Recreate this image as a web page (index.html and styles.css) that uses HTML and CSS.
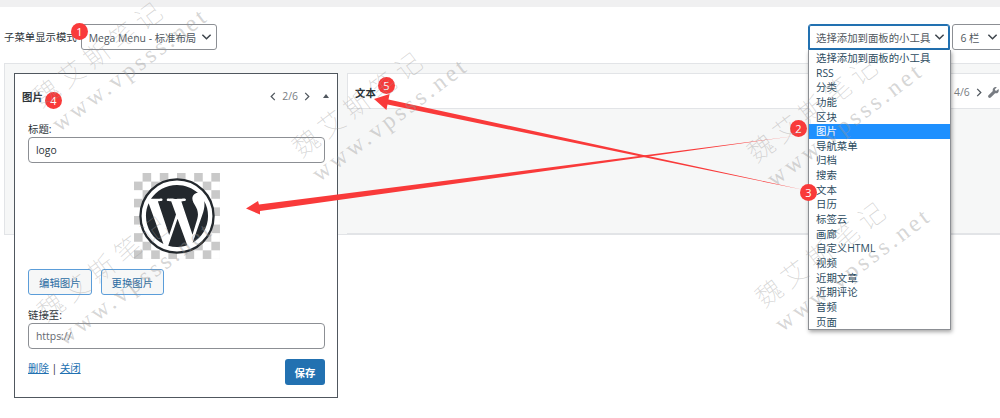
FILE: index.html
```html
<!DOCTYPE html>
<html lang="zh-CN">
<head>
    <meta charset="UTF-8">
    <title>子菜单显示模式</title>
    <link rel="stylesheet" href="styles.css">
</head>
<body>
    <div class="topbar"></div>

    <div class="toolbar">
        <div class="mode">
            <label>子菜单显示模式</label>
            <div class="select mode-select">Mega Menu - 标准布局<svg class="chev" viewBox="0 0 12 8"><path d="M1.5 1.5 6 6l4.500-4.500"/></svg></div>
        </div>
        <div class="tools">
            <div class="select widget-select">选择添加到面板的小工具<svg class="chev" viewBox="0 0 12 8"><path d="M1.5 1.5 6 6l4.500-4.500"/></svg></div>
            <div class="select cols-select">6 栏<svg class="chev" viewBox="0 0 12 8"><path d="M1.5 1.5 6 6l4.500-4.500"/></svg></div>
        </div>
    </div>

    <div class="panel">
        <div class="slot">
            <div class="widget-open">
                <div class="open-head">
                    <strong>图片</strong>
                    <div class="pager">
                        <svg class="nav-arrow" viewBox="0 0 6 10"><path d="M5 1 1 5l4 4"/></svg>
                        <span>2/6</span>
                        <svg class="nav-arrow" viewBox="0 0 6 10"><path d="M1 1l4 4-4 4"/></svg>
                        <span class="caret"></span>
                    </div>
                </div>
                <div class="open-body">
                    <div class="field">
                        <label>标题:</label>
                        <div class="input">logo</div>
                    </div>
                    <div class="picture">
                        <svg class="wp-logo" viewBox="-1.2 -1.2 26.4 26.4">
                            <circle cx="12" cy="12" r="12.7" fill="#fff" stroke="#23282d" stroke-width="0.8"/>
                            <path fill="#23282d" d="M21.469 6.825c.84 1.537 1.318 3.3 1.318 5.175 0 3.979-2.156 7.456-5.363 9.325l3.295-9.527c.615-1.54.82-2.771.82-3.864 0-.405-.026-.78-.07-1.11m-7.981.105c.647-.03 1.232-.105 1.232-.105.582-.075.514-.93-.067-.899 0 0-1.755.135-2.88.135-1.064 0-2.85-.15-2.85-.15-.585-.03-.661.855-.075.885 0 0 .54.061 1.125.09l1.68 4.605-2.37 7.08L5.354 6.9c.649-.03 1.234-.1 1.234-.1.585-.075.516-.93-.065-.896 0 0-1.746.138-2.874.138-.2 0-.438-.008-.69-.015C4.911 3.15 8.235 1.215 12 1.215c2.809 0 5.365 1.072 7.286 2.833-.046-.003-.091-.009-.141-.009-1.06 0-1.812.923-1.812 1.914 0 .89.513 1.643 1.06 2.531.411.72.89 1.643.89 2.977 0 .915-.354 1.994-.821 3.479l-1.075 3.585-3.9-11.61.001.014zM12 22.784c-1.059 0-2.081-.153-3.048-.437l3.237-9.406 3.315 9.087c.024.053.05.101.078.149-1.12.393-2.325.609-3.582.609M1.211 12c0-1.564.336-3.05.935-4.39L7.29 21.709C3.694 19.96 1.212 16.271 1.211 12"/>
                        </svg>
                    </div>
                    <div class="image-btns">
                        <button class="btn">编辑图片</button>
                        <button class="btn">更换图片</button>
                    </div>
                    <div class="field link-field">
                        <label>链接至:</label>
                        <div class="input muted">https://</div>
                    </div>
                    <div class="open-foot">
                        <div class="foot-links"><a href="#">删除</a> | <a href="#">关闭</a></div>
                        <button class="save">保存</button>
                    </div>
                </div>
            </div>
        </div>
        <div class="widget-closed">
            <div class="closed-head">
                <strong>文本</strong>
                <div class="pager right">
                    <span>4/6</span>
                    <svg class="nav-arrow" viewBox="0 0 6 10"><path d="M1 1l4 4-4 4"/></svg>
                    <svg class="wrench" viewBox="0 0 20 20"><path d="M19 3.500l-3.500 3.500-2.500-.5-.5-2.500L16 .5c-2-.8-4.500-.4-6 1.100-1.500 1.500-1.900 3.600-1.200 5.500L1 15c-1.200 1.200-1.200 2.800 0 4s2.800 1.200 4 0l7.900-7.800c1.900.7 4 .3 5.500-1.200 1.500-1.500 1.400-4.500.6-6.500z"/></svg>
                </div>
            </div>
            <div class="closed-body"></div>
        </div>
    </div>

    <ul class="dropdown">
        <li>选择添加到面板的小工具</li>
        <li>RSS</li>
        <li>分类</li>
        <li>功能</li>
        <li>区块</li>
        <li class="active">图片</li>
        <li>导航菜单</li>
        <li>归档</li>
        <li>搜索</li>
        <li>文本</li>
        <li>日历</li>
        <li>标签云</li>
        <li>画廊</li>
        <li>自定义HTML</li>
        <li>视频</li>
        <li>近期文章</li>
        <li>近期评论</li>
        <li>音频</li>
        <li>页面</li>
    </ul>

    <!-- annotation arrows on top of the screenshot -->
    <svg class="arrows" viewBox="0 0 1000 418">
        <polygon fill="#f93a3a" points="246,208.500 258,201 259,204.500 797,135.700 260,211 260,214.500"/>
        <polygon fill="#f93a3a" points="374,99 389.600,94 388.500,99.500 803,189.800 387.500,104.500 386.400,110"/>
    </svg>

    <span class="badge b1">1</span>
    <span class="badge b2">2</span>
    <span class="badge b3">3</span>
    <span class="badge b4">4</span>
    <span class="badge b5">5</span>

    <div class="wm wm-a"><div class="wm-name">魏艾斯笔记</div><div class="wm-url">www.vpsss.net</div></div>
    <div class="wm wm-b"><div class="wm-name">魏艾斯笔记</div><div class="wm-url">www.vpsss.net</div></div>
    <div class="wm wm-c"><div class="wm-name">魏艾斯笔记</div><div class="wm-url">www.vpsss.net</div></div>
    <div class="wm wm-d"><div class="wm-name">魏艾斯笔记</div><div class="wm-url">www.vpsss.net</div></div>
    <div class="wm wm-e"><div class="wm-name">魏艾斯笔记</div><div class="wm-url">www.vpsss.net</div></div>
</body>
</html>
```

FILE: styles.css
```css
* {
    box-sizing: border-box;
}
html, body {
    height: 418px;
    overflow: hidden;
}
body {
    margin: 0;
    position: relative;
    background: #fff;
    color: #2c3338;
    font-family: "Open Sans", "Noto Sans CJK SC", sans-serif;
    font-size: 10.4px;
}
.topbar {
    height: 7px;
    background: #f0f0f1;
}

/* toolbar */
.toolbar {
    display: flex;
    justify-content: space-between;
    padding: 17px 0 0 4px;
    height: 56px;
}
.mode {
    display: flex;
    align-items: flex-start;
    gap: 4px;
}
.mode label {
    line-height: 26px;
}
.tools {
    display: flex;
    gap: 2px;
    width: 195px;
    flex: none;
    margin-right: -3px;
}
.select {
    display: flex;
    align-items: center;
    justify-content: space-between;
    height: 26px;
    padding: 0 4px 0 7px;
    background: #fff;
    border: 1px solid #8c8f94;
    border-radius: 3px;
    color: #50575e;
    white-space: nowrap;
}
.mode-select {
    width: 136px;
}
.widget-select {
    width: 144px;
    border-color: #2271b1;
    box-shadow: 0 0 0 1px #2271b1 inset;
    border-radius: 3px 3px 0 0;
}
.cols-select {
    width: 51px;
}
.chev {
    width: 11px;
    height: 8px;
    flex: none;
    fill: none;
    stroke: #3c434a;
    stroke-width: 1.6;
}

/* panel */
.panel {
    display: flex;
    gap: 9px;
    margin-left: 4px;
    height: 172px;
    padding: 9px 0 0 9px;
    background: #f6f7f7;
    border: 1px solid #e2e4e7;
    border-right: 0;
    margin-right: -10px;
}
.slot {
    position: relative;
    width: 324px;
    flex: none;
}
.widget-open {
    position: absolute;
    left: 0;
    top: 0;
    width: 324px;
    height: 325px;
    background: #fff;
    border: 1px solid #50575e;
    z-index: 1;
}
.open-head {
    display: flex;
    justify-content: space-between;
    align-items: center;
    padding: 10px 8px 0 7px;
    height: 34px;
}
.pager {
    display: flex;
    align-items: center;
    gap: 6px;
    color: #787c82;
    font-size: 10.4px;
}
.nav-arrow {
    width: 6px;
    height: 9px;
    fill: none;
    stroke: #50575e;
    stroke-width: 1.4;
}
.caret {
    width: 0;
    height: 0;
    margin-left: 7px;
    border: 3px solid transparent;
    border-top: 0;
    border-bottom: 4px solid #50575e;
}
.open-body {
    padding: 14px 12px 0 13px;
}
.field label {
    display: block;
    line-height: 14px;
    margin-bottom: 1px;
}
.input {
    height: 26px;
    line-height: 24px;
    padding: 0 7px;
    border: 1px solid #8c8f94;
    border-radius: 4px;
    background: #fff;
    color: #2c3338;
}
.muted {
    color: #646970;
}
.picture {
    margin: 10px auto 10px;
    width: 86px;
    height: 86px;
    display: flex;
    align-items: center;
    justify-content: center;
    background: conic-gradient(#c9c9c9 25%, #fff 0 50%, #c9c9c9 0 75%, #fff 0) 0 0 / 17.2px 17.2px;
}
.wp-logo {
    width: 76px;
    height: 76px;
}
.image-btns {
    display: flex;
    gap: 9px;
}
.btn {
    height: 26px;
    padding: 0 10px;
    font: inherit;
    color: #2b6ca3;
    background: #f6f7f7;
    border: 1px solid #5b9dd9;
    border-radius: 3px;
}
.link-field {
    margin-top: 13px;
}
.open-foot {
    display: flex;
    justify-content: space-between;
    align-items: flex-start;
    margin-top: 10px;
}
.foot-links {
    margin-top: 1px;
}
.foot-links a {
    color: #2271b1;
}
.save {
    width: 40px;
    height: 26px;
    padding: 0;
    font: inherit;
    font-weight: 700;
    color: #fff;
    background: #2271b1;
    border: 0;
    border-radius: 3px;
}
.widget-closed {
    flex: 1;
    display: flex;
    flex-direction: column;
    border-bottom: 1px solid #e2e4e7;
}
.closed-head {
    display: flex;
    justify-content: space-between;
    align-items: center;
    height: 36px;
    padding: 2px 0 0 7px;
    background: #fff;
    border: 1px solid #e2e4e7;
    border-right: 0;
}
.right {
    width: 56px;
}
.wrench {
    width: 11px;
    height: 11px;
    fill: #787c82;
}

/* open select list */
.dropdown {
    position: absolute;
    left: 808px;
    top: 50px;
    width: 143px;
    height: 280px;
    margin: 0;
    padding: 1px 0 0;
    list-style: none;
    background: #fff;
    border: 1px solid #8c8f94;
    border-top: 0;
    box-shadow: 1px 2px 4px rgba(0,0,0,0.35);
    z-index: 2;
}
.dropdown li {
    height: 14.65px;
    line-height: 14.65px;
    padding-left: 7px;
    color: #2c4b60;
}
.dropdown .active {
    background: #1e90ff;
    color: #fff;
}

/* red marks */
.arrows {
    position: absolute;
    left: 0;
    top: 0;
    width: 1000px;
    height: 418px;
    z-index: 3;
}
.badge {
    position: absolute;
    width: 17px;
    height: 17px;
    border-radius: 50%;
    background: #f93a3a;
    color: #fff;
    font-size: 11px;
    line-height: 17px;
    text-align: center;
    z-index: 4;
}
.b1 { left: 71px; top: 23px; }
.b2 { left: 790px; top: 120px; }
.b3 { left: 800px; top: 184px; }
.b4 { left: 45px; top: 92px; }
.b5 { left: 378px; top: 77px; }

/* watermark */
.wm {
    position: absolute;
    transform: rotate(-37deg);
    transform-origin: 0 0;
    color: rgba(150,150,150,0.4);
    white-space: nowrap;
    z-index: 5;
    pointer-events: none;
}
.wm-name {
    font-family: "Noto Sans CJK SC", sans-serif;
    font-weight: 100;
    font-size: 26px;
    line-height: 32px;
    letter-spacing: 6px;
}
.wm-url {
    font-family: "Liberation Serif", serif;
    font-size: 24px;
    line-height: 34px;
    letter-spacing: 3.5px;
}
.wm-a { left: 25px; top: 87px; }
.wm-b { left: 285px; top: 137px; }
.wm-c { left: 740px; top: 142px; }
.wm-d { left: 30px; top: 301px; }
.wm-e { left: 748px; top: 287px; }
```
